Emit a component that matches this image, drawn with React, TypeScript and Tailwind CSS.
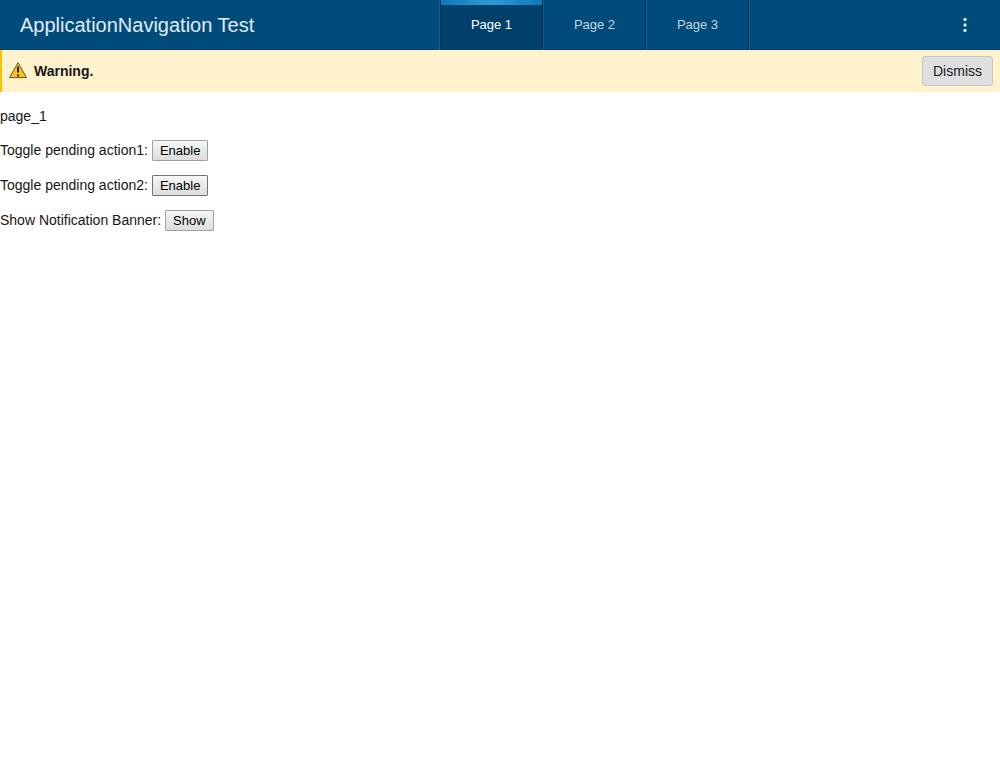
const tabs = ["Page 1", "Page 2", "Page 3"];

const rows = [
  { id: "action1", label: "Toggle pending action1:", action: "Enable", border: "border-[#a0a0a0]" },
  { id: "action2", label: "Toggle pending action2:", action: "Enable", border: "border-[#747474]" },
  { id: "banner", label: "Show Notification Banner:", action: "Show", border: "border-[#a0a0a0]" },
];

export default function App() {
  return (
    <div className="min-h-screen bg-white font-['Liberation_Sans',Arial,sans-serif] text-sm text-[#161616]">
      <header className="grid h-[50px] grid-cols-[439px_1fr_auto] items-stretch bg-[#004b7a] shadow-[inset_0_-1px_0_#00416b]">
        <h1 className="self-center pl-5 text-xl text-[#e0ecf4]">ApplicationNavigation Test</h1>
        <nav className="flex w-fit border-x border-[#0f6299]">
          {tabs.map((tab, i) => (
            <a
              key={tab}
              href="#"
              aria-current={i === 0 ? "page" : undefined}
              className={
                i === 0
                  ? "flex w-[103px] flex-col border-x border-[#002f4d] bg-[#00406a] text-[13px] text-white"
                  : "flex w-[103px] flex-col border-r border-l border-r-[#002f4d] border-l-[#0f6299] text-[13px] text-[#c0d4e2]"
              }
            >
              {i === 0 && <span className="-mb-[5px] h-[5px] bg-linear-to-r from-[#0b7abb] via-[#3297d6] to-[#0b7abb]" />}
              <span className="flex flex-1 items-center justify-center">{tab}</span>
            </a>
          ))}
        </nav>
        <button type="button" aria-label="More options" className="flex w-[70px] items-center justify-center text-[#d6e4ee]">
          <svg width="4" height="16" viewBox="0 0 4 16" fill="currentColor">
            <circle cx="2" cy="2.5" r="1.7" />
            <circle cx="2" cy="8" r="1.7" />
            <circle cx="2" cy="13.5" r="1.7" />
          </svg>
        </button>
      </header>
      <div role="alert" className="flex h-[42px] items-center border-l-2 border-[#ffc000] bg-[#fff2cc] px-[7px]">
        <svg width="18" height="18" viewBox="0 0 18 18">
          <path d="M9 .7 17.5 15.6H.5Z" fill="#ffc20e" stroke="#333" strokeWidth=".8" />
          <path d="M8 4.5h2v6H8ZM8 12.5h2v2H8z" fill="#222" />
        </svg>
        <strong className="ml-[7px] flex-1">Warning.</strong>
        <button type="button" className="h-[30px] rounded-[3px] border border-[#c4c8cc] bg-[#dfdfdf] px-[10px]">Dismiss</button>
      </div>
      <main className="pt-4">
        <p className="leading-4">page_1</p>
        <div className="flex flex-col gap-[14px] pt-4">
          {rows.map((row) => (
            <div key={row.id} className="flex items-baseline gap-1">
              <label htmlFor={row.id} className="leading-4">{row.label}</label>
              <button id={row.id} type="button" className={`${row.border} rounded-[1px] border bg-linear-to-b from-[#f6f6f6] to-[#dddddd] px-[7px] pt-[2px] pb-px text-[13px] leading-4 text-black`}>
                {row.action}
              </button>
            </div>
          ))}
        </div>
      </main>
    </div>
  );
}
